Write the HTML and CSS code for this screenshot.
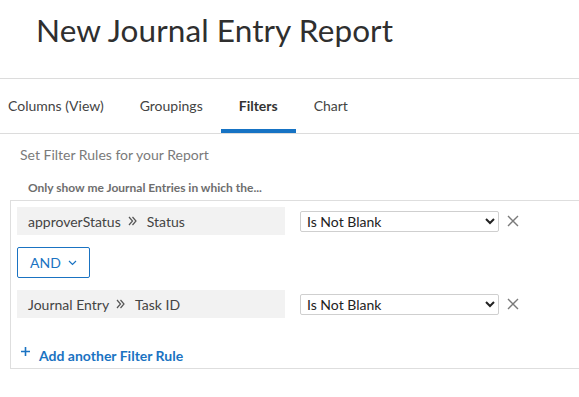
FILE: index.html
```html
<!DOCTYPE html>
<html>
<head>
<meta charset="utf-8">
<link rel="stylesheet" href="styles.css">
</head>
<body>
<header class="page-header">
  <h1 class="title">New Journal Entry Report</h1>
</header>
<nav class="tabs">
  <a class="tab">Columns (View)</a>
  <a class="tab">Groupings</a>
  <a class="tab active">Filters</a>
  <a class="tab">Chart</a>
</nav>
<main class="content">
  <div class="heading">Set Filter Rules for your Report</div>
  <div class="subheading">Only show me Journal Entries in which the...</div>
  <div class="rules">
    <div class="rule">
      <div class="field">approverStatus
        <svg class="dchev" width="9" height="10" viewBox="0 0 9 10"><path d="M1 1 L4.5 5 L1 9 M4.5 1 L8 5 L4.5 9" fill="none" stroke="#555" stroke-width="1.2"/></svg>
        Status</div>
      <select class="op"><option>Is Not Blank</option></select>
      <svg class="remove" width="12" height="12" viewBox="0 0 12 12"><path d="M1 1 L11 11 M11 1 L1 11" stroke="#7a7a7a" stroke-width="1.4"/></svg>
    </div>
    <button class="andbtn">AND
      <svg width="9" height="6" viewBox="0 0 9 6"><path d="M1 1 L4.5 4.5 L8 1" fill="none" stroke="#1a73c2" stroke-width="1.2"/></svg>
    </button>
    <div class="rule">
      <div class="field">Journal Entry
        <svg class="dchev" width="9" height="10" viewBox="0 0 9 10"><path d="M1 1 L4.5 5 L1 9 M4.5 1 L8 5 L4.5 9" fill="none" stroke="#555" stroke-width="1.2"/></svg>
        Task ID</div>
      <select class="op"><option>Is Not Blank</option></select>
      <svg class="remove" width="12" height="12" viewBox="0 0 12 12"><path d="M1 1 L11 11 M11 1 L1 11" stroke="#7a7a7a" stroke-width="1.4"/></svg>
    </div>
    <a class="add">
      <svg class="plus" width="9" height="9" viewBox="0 0 9 9"><path d="M4.5 0 V9 M0 4.5 H9" stroke="#1a73c2" stroke-width="1.6"/></svg>
      Add another Filter Rule</a>
  </div>
</main>
</body>
</html>
```
FILE: styles.css
```css
html, body {
  margin: 0;
  padding: 0;
  background: #fff;
  overflow: hidden;
}
body {
  font-family: "Lato", "Open Sans", sans-serif;
  color: #333;
  width: 579px;
}
.page-header {
  height: 79px;
  border-bottom: 1px solid #dcdcdc;
  padding-left: 36px;
  box-sizing: border-box;
}
.title {
  margin: 0;
  padding-top: 11px;
  font-size: 31.5px;
  font-weight: 400;
  color: #2f2f2f;
  letter-spacing: 0.1px;
}
.tabs {
  display: flex;
  height: 55px;
  border-bottom: 1px solid #dcdcdc;
  box-sizing: border-box;
  margin-left: -10px;
}
.tab {
  display: flex;
  align-items: center;
  padding: 0 18px;
  font-size: 14px;
  color: #444;
  border-bottom: 4px solid transparent;
  padding-top: 3px;
}
.tab.active {
  font-weight: 700;
  color: #333;
  border-bottom-color: #1673c4;
}
.content {
  padding-left: 10px;
}
.heading {
  font-size: 14px;
  color: #7a7a7a;
  padding: 12px 0 0 10px;
  height: 29px;
  box-sizing: border-box;
}
.subheading {
  font-size: 12px;
  font-weight: 700;
  color: #6e6e6e;
  padding: 17px 0 0 18px;
  height: 37px;
  box-sizing: border-box;
}
.rules {
  border: 1px solid #dedede;
  border-right: none;
  padding: 6px 0 0 6px;
  height: 169px;
  box-sizing: border-box;
}
.rule {
  display: flex;
  align-items: center;
}
.field {
  width: 268px;
  height: 28px;
  background: #f2f2f2;
  display: flex;
  align-items: center;
  padding-left: 11px;
  box-sizing: border-box;
  font-size: 14px;
  color: #444;
  gap: 7px;
}
.dchev {
  margin-right: 3px;
}
.op {
  margin-left: 15px;
  width: 199px;
  height: 21px;
  font-family: "Lato", sans-serif;
  font-size: 14px;
  color: #222;
  border: 1px solid #cfcfcf;
  border-radius: 2px;
  background: #fff;
  padding: 0 2px;
}
.remove {
  margin-left: 8px;
}
.andbtn {
  margin: 12px 0 12px 0;
  width: 73px;
  height: 31px;
  border: 1px solid #1a73c2;
  border-radius: 2px;
  background: #fff;
  color: #1a73c2;
  font-family: "Lato", sans-serif;
  font-size: 14px;
  display: flex;
  align-items: center;
  justify-content: center;
  gap: 7px;
  padding: 0;
}
.add {
  display: flex;
  align-items: center;
  gap: 9px;
  margin-top: 29px;
  padding-left: 4px;
  font-size: 14px;
  font-weight: 700;
  color: #1a73c2;
}
.plus {
  position: relative;
  top: -4px;
}
```
